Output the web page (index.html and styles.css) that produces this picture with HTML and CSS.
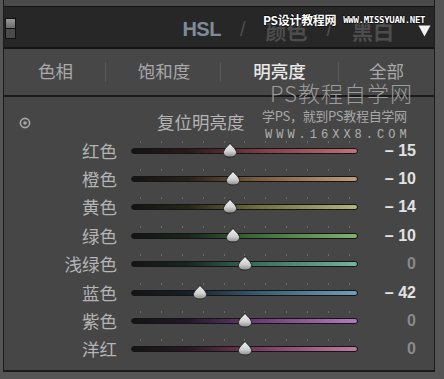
FILE: index.html
```html
<!DOCTYPE html>
<html lang="zh">
<head>
<meta charset="utf-8">
<link rel="stylesheet" href="styles.css">
</head>
<body>
<div class="app">
  <div class="topstrip"></div>
  <header class="header">
    <div class="toggle"><span class="tg-top"></span><span class="tg-bot"></span></div>
    <div class="title">
      <span class="hsl">HSL</span>
      <span class="dim slash">/</span>
      <span class="dim cjk">颜色</span>
      <span class="dim slash">/</span>
      <span class="dim cjk">黑白</span>
      <svg class="tri" width="13" height="12" viewBox="0 0 13 12"><path d="M0.5 0.5 H12.5 L6.5 11.5 Z" fill="#f2f2f2"/></svg>
    </div>
    <div class="wm-top"><span class="wm-top-cn">PS设计教程网</span><span class="wm-top-en">WWW.MISSYUAN.NET</span></div>
  </header>
  <nav class="tabs">
    <div class="tab t1">色相</div>
    <div class="tab t2">饱和度</div>
    <div class="tab t3 active">明亮度</div>
    <div class="tab t4">全部</div>
  </nav>
  <section class="panel">
    <div class="wm-big">PS教程自学网</div>
    <div class="wm-mid">学PS，就到PS教程自学网</div>
    <div class="wm-url">WWW.16XX8.COM</div>
    <div class="reset-row">
      <svg class="target" width="12" height="12" viewBox="0 0 12 12"><circle cx="6" cy="6" r="4.6" fill="none" stroke="#a8a8a8" stroke-width="1.6"/><circle cx="6" cy="6" r="1.8" fill="#a8a8a8"/></svg>
      <span class="reset">复位明亮度</span>
    </div>
    <div class="row"><span class="label">红色</span><div class="slider red"><div class="ticks"><i></i><i></i><i></i><i></i><i></i><i></i><i></i><i></i><i></i><i></i><i></i></div><div class="track"></div><svg class="thumb" style="left:43.5%" width="16" height="16" viewBox="0 0 16 16"><path d="M8 1 C9.5 4 14.5 7 14.5 10.5 C14.5 13.5 12 15 8 15 C4 15 1.5 13.5 1.5 10.5 C1.5 7 6.5 4 8 1 Z" fill="url(#g)" stroke="#222" stroke-width="1"/></svg></div><span class="val">– 15</span></div>
    <div class="row"><span class="label">橙色</span><div class="slider orange"><div class="ticks"><i></i><i></i><i></i><i></i><i></i><i></i><i></i><i></i><i></i><i></i><i></i></div><div class="track"></div><svg class="thumb" style="left:45%" width="16" height="16" viewBox="0 0 16 16"><path d="M8 1 C9.5 4 14.5 7 14.5 10.5 C14.5 13.5 12 15 8 15 C4 15 1.5 13.5 1.5 10.5 C1.5 7 6.5 4 8 1 Z" fill="url(#g)" stroke="#222" stroke-width="1"/></svg></div><span class="val">– 10</span></div>
    <div class="row"><span class="label">黄色</span><div class="slider yellow"><div class="ticks"><i></i><i></i><i></i><i></i><i></i><i></i><i></i><i></i><i></i><i></i><i></i></div><div class="track"></div><svg class="thumb" style="left:43.5%" width="16" height="16" viewBox="0 0 16 16"><path d="M8 1 C9.5 4 14.5 7 14.5 10.5 C14.5 13.5 12 15 8 15 C4 15 1.5 13.5 1.5 10.5 C1.5 7 6.5 4 8 1 Z" fill="url(#g)" stroke="#222" stroke-width="1"/></svg></div><span class="val">– 14</span></div>
    <div class="row"><span class="label">绿色</span><div class="slider green"><div class="ticks"><i></i><i></i><i></i><i></i><i></i><i></i><i></i><i></i><i></i><i></i><i></i></div><div class="track"></div><svg class="thumb" style="left:45%" width="16" height="16" viewBox="0 0 16 16"><path d="M8 1 C9.5 4 14.5 7 14.5 10.5 C14.5 13.5 12 15 8 15 C4 15 1.5 13.5 1.5 10.5 C1.5 7 6.5 4 8 1 Z" fill="url(#g)" stroke="#222" stroke-width="1"/></svg></div><span class="val">– 10</span></div>
    <div class="row"><span class="label">浅绿色</span><div class="slider aqua"><div class="ticks"><i></i><i></i><i></i><i></i><i></i><i></i><i></i><i></i><i></i><i></i><i></i></div><div class="track"></div><svg class="thumb" style="left:50%" width="16" height="16" viewBox="0 0 16 16"><path d="M8 1 C9.5 4 14.5 7 14.5 10.5 C14.5 13.5 12 15 8 15 C4 15 1.5 13.5 1.5 10.5 C1.5 7 6.5 4 8 1 Z" fill="url(#g)" stroke="#222" stroke-width="1"/></svg></div><span class="val zero">0</span></div>
    <div class="row"><span class="label">蓝色</span><div class="slider blue"><div class="ticks"><i></i><i></i><i></i><i></i><i></i><i></i><i></i><i></i><i></i><i></i><i></i></div><div class="track"></div><svg class="thumb" style="left:30.5%" width="16" height="16" viewBox="0 0 16 16"><path d="M8 1 C9.5 4 14.5 7 14.5 10.5 C14.5 13.5 12 15 8 15 C4 15 1.5 13.5 1.5 10.5 C1.5 7 6.5 4 8 1 Z" fill="url(#g)" stroke="#222" stroke-width="1"/></svg></div><span class="val">– 42</span></div>
    <div class="row"><span class="label">紫色</span><div class="slider purple"><div class="ticks"><i></i><i></i><i></i><i></i><i></i><i></i><i></i><i></i><i></i><i></i><i></i></div><div class="track"></div><svg class="thumb" style="left:50%" width="16" height="16" viewBox="0 0 16 16"><path d="M8 1 C9.5 4 14.5 7 14.5 10.5 C14.5 13.5 12 15 8 15 C4 15 1.5 13.5 1.5 10.5 C1.5 7 6.5 4 8 1 Z" fill="url(#g)" stroke="#222" stroke-width="1"/></svg></div><span class="val zero">0</span></div>
    <div class="row"><span class="label">洋红</span><div class="slider magenta"><div class="ticks"><i></i><i></i><i></i><i></i><i></i><i></i><i></i><i></i><i></i><i></i><i></i></div><div class="track"></div><svg class="thumb" style="left:50%" width="16" height="16" viewBox="0 0 16 16"><path d="M8 1 C9.5 4 14.5 7 14.5 10.5 C14.5 13.5 12 15 8 15 C4 15 1.5 13.5 1.5 10.5 C1.5 7 6.5 4 8 1 Z" fill="url(#g)" stroke="#222" stroke-width="1"/></svg></div><span class="val zero">0</span></div>
  </section>
</div>
<svg width="0" height="0" class="defs"><defs><linearGradient id="g" x1="0" y1="0" x2="0" y2="1"><stop offset="0" stop-color="#f4f4f4"/><stop offset="0.6" stop-color="#d0d0d0"/><stop offset="1" stop-color="#8c8c8c"/></linearGradient></defs></svg>
</body>
</html>
```

FILE: styles.css
```css
html, body {
  margin: 0;
  padding: 0;
}
body {
  width: 444px;
  height: 379px;
  background: #555555;
  overflow: hidden;
  font-family: "Noto Sans CJK SC", "Noto Sans", sans-serif;
}
.defs { position: absolute; }
.app {
  margin-left: 3px;
  width: 430px;
  border-left: 1px solid #1c1c1c;
  border-right: 1px solid #1c1c1c;
  display: flex;
  flex-direction: column;
}
.topstrip {
  height: 6px;
  background: #4a4a4a;
  border-bottom: 1px solid #151515;
}
.header {
  position: relative;
  height: 40px;
  background: #272727;
  border-bottom: 2px solid #141414;
  display: flex;
  align-items: center;
}
.toggle {
  margin-left: 1px;
  width: 9px;
  height: 19px;
  border: 1px solid #111;
  display: flex;
  flex-direction: column;
  margin-top: 2px;
}
.tg-top { flex: 1; background: linear-gradient(#9a9a9a, #6a6a6a); }
.tg-bot { flex: 1; background: #4a4a4a; border-top: 1px solid #111; }
.title {
  margin-left: auto;
  margin-right: 3px;
  display: flex;
  align-items: center;
  margin-top: 5px;
}
.hsl {
  font-family: "Liberation Sans", sans-serif;
  font-weight: bold;
  font-size: 20px;
  color: #7f8c98;
  letter-spacing: -0.5px;
}
.dim { color: #4d4d4d; }
.slash {
  font-family: "Liberation Sans", sans-serif;
  font-size: 20px;
  margin: 0 20px 0 19px;
}
.cjk {
  font-size: 21px;
  font-weight: bold;
  line-height: 24px;
}
.tri { margin-left: 24px; margin-top: 3px; }
.wm-top {
  position: absolute;
  top: 4px;
  left: 259px;
  display: flex;
  align-items: center;
  gap: 7px;
}
.wm-top-cn {
  font-size: 12px;
  font-weight: bold;
  color: #fff;
  text-shadow: 1px 0 0 #111, -1px 0 0 #111, 0 1px 0 #111, 0 -1px 0 #111;
  letter-spacing: -0.3px;
}
.wm-top-en {
  font-family: "DejaVu Sans Mono", monospace;
  font-size: 9px;
  font-weight: bold;
  color: #fff;
  letter-spacing: -0.3px;
  text-shadow: 1px 0 0 #111, -1px 0 0 #111, 0 1px 0 #111, 0 -1px 0 #111;
}
.tabs {
  height: 46px;
  background: #474747;
  border-bottom: 2px solid #1b1b1b;
  display: grid;
  grid-template-columns: 101px 115px 118px 96px;
  align-items: center;
}
.tab {
  text-align: center;
  font-size: 17.5px;
  color: #a9a9a9;
  height: 18px;
  line-height: 18px;
  padding-bottom: 2px;
}
.tab + .tab { border-left: 1px solid #5a5a5a; }
.t1 { padding-left: 2px; }
.t2 { padding-left: 2px; }
.tab.active { color: #e8e8e8; font-weight: 500; }
.panel {
  position: relative;
  height: 275px;
  background: #464646;
  border-bottom: 2px solid #1b1b1b;
  padding-top: 10px;
  box-sizing: border-box;
}
.wm-big {
  position: absolute;
  top: -21px;
  left: 266px;
  font-size: 22px;
  color: #9c9c9c;
  letter-spacing: 1px;
  font-weight: 300;
  white-space: nowrap;
}
.wm-mid {
  position: absolute;
  top: 9px;
  left: 258px;
  font-size: 13px;
  color: #a8a8a8;
  letter-spacing: -0.3px;
  white-space: nowrap;
}
.wm-url {
  position: absolute;
  top: 31px;
  left: 261px;
  font-family: "Liberation Mono", monospace;
  font-size: 12px;
  color: #b0b0b0;
  letter-spacing: 4px;
  white-space: nowrap;
}
.reset-row {
  height: 29.5px;
  display: flex;
  align-items: center;
}
.target { margin-left: 15px; margin-top: 2px; }
.reset {
  margin-left: 126px;
  font-size: 17.5px;
  color: #b4b4b4;
  margin-top: -1px;
}
.row {
  height: 28.4px;
  display: grid;
  grid-template-columns: 113px 227px 44px;
  column-gap: 14px;
  align-items: center;
}
.label {
  text-align: right;
  font-size: 17.5px;
  color: #b4b4b4;
  line-height: 20px;
}
.slider {
  position: relative;
  height: 20px;
  display: flex;
  align-items: center;
}
.track {
  width: 100%;
  height: 6px;
  border-radius: 4px;
  border: 1px solid #151515;
  box-sizing: border-box;
}
.ticks {
  position: absolute;
  top: 0;
  left: 9px;
  right: 8px;
  display: flex;
  justify-content: space-between;
}
.ticks i {
  display: block;
  width: 1px;
  height: 2px;
  background: #6e6e6e;
}
.thumb {
  position: absolute;
  top: 1px;
  margin-left: -8px;
}
.red .track { background: linear-gradient(90deg, #141414 0%, #2a1a1a 25%, #7a3a44 55%, #c0707c 100%); }
.orange .track { background: linear-gradient(90deg, #141414 0%, #2a2218 25%, #7a5a3c 55%, #c09c7c 100%); }
.yellow .track { background: linear-gradient(90deg, #141414 0%, #262618 25%, #6e6e3a 55%, #b4b480 100%); }
.green .track { background: linear-gradient(90deg, #141414 0%, #18261a 25%, #3e6a3a 55%, #84b070 100%); }
.aqua .track { background: linear-gradient(90deg, #141414 0%, #182624 25%, #3a6e5a 55%, #74b49c 100%); }
.blue .track { background: linear-gradient(90deg, #141414 0%, #181f28 25%, #355a70 55%, #70a0b8 100%); }
.purple .track { background: linear-gradient(90deg, #141414 0%, #24182a 25%, #6a3a78 55%, #b07cc0 100%); }
.magenta .track { background: linear-gradient(90deg, #141414 0%, #2a1822 25%, #783a5c 55%, #c07ca0 100%); }
.val {
  text-align: right;
  font-family: "Liberation Sans", sans-serif;
  font-weight: bold;
  font-size: 16px;
  color: #e2e2e2;
  white-space: pre;
}
.val.zero { color: #8a8a8a; }
```
